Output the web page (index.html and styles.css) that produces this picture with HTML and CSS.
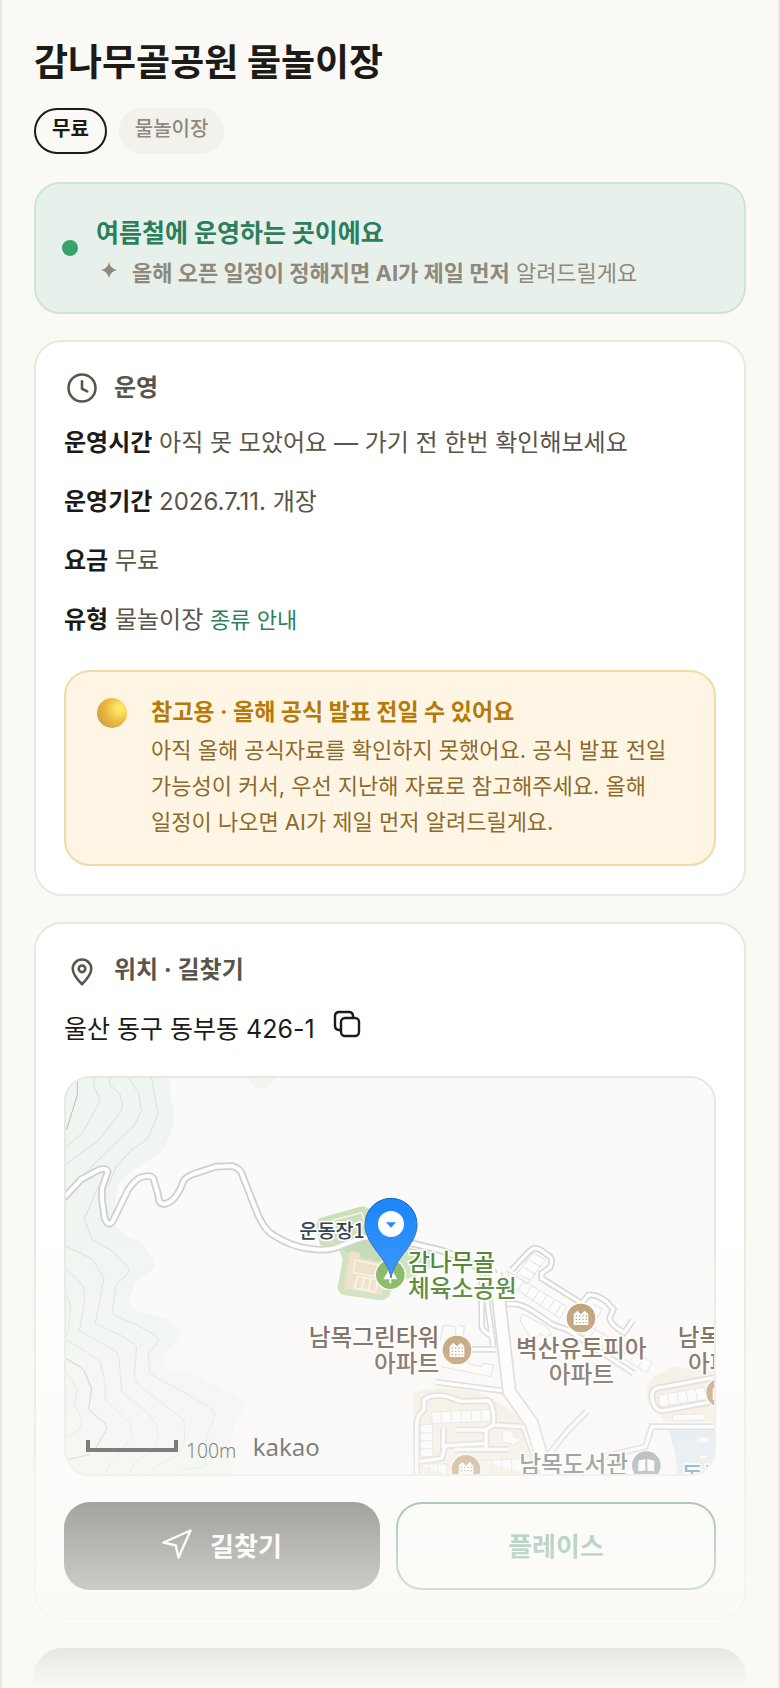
FILE: index.html
```html
<!DOCTYPE html>
<html lang="ko">
  <head>
    <meta charset="UTF-8" />
    <meta name="viewport" content="width=device-width, initial-scale=1.0" />
    <title>감나무골공원 물놀이장</title>
    <link rel="stylesheet" href="styles.css">
  </head>
  <body>
    <main class="page">
      <h1 class="title">감나무골공원 물놀이장</h1>
      <div class="chips">
        <span class="chip chip-free">무료</span>
        <span class="chip">물놀이장</span>
      </div>

      <section class="status">
        <span class="dot"></span>
        <div class="status-body">
          <h2 class="status-title">여름철에 운영하는 곳이에요</h2>
          <p class="status-sub">
            <svg class="spark" viewBox="0 0 16 16"><path d="M8 0Q9 6.500 16 8Q9.500 9.500 8 16Q6.500 9.500 0 8Q7 6.500 8 0Z" /></svg>
            <span><b>올해 오픈 일정이 정해지면 AI가 제일 먼저</b> 알려드릴게요</span>
          </p>
        </div>
      </section>

      <section class="card">
        <h2 class="card-head">
          <svg class="head-icon" viewBox="0 0 24 24"><circle cx="12" cy="12" r="9" /><path d="M12 7.5v5l3.5 1.8" /></svg>
          운영
        </h2>
        <div class="rows">
          <p><b>운영시간</b> 아직 못 모았어요 — 가기 전 한번 확인해보세요</p>
          <p><b>운영기간</b> 2026.7.11. 개장</p>
          <p><b>요금</b> 무료</p>
          <p><b>유형</b> 물놀이장 <a class="kind" href="#">종류 안내</a></p>
        </div>
        <div class="notice">
          <span class="orb"></span>
          <div class="notice-body">
            <h3 class="notice-title">참고용 · 올해 공식 발표 전일 수 있어요</h3>
            <p>아직 올해 공식자료를 확인하지 못했어요. 공식 발표 전일 가능성이 커서, 우선 지난해 자료로 참고해주세요. 올해 일정이 나오면 AI가 제일 먼저 알려드릴게요.</p>
          </div>
        </div>
      </section>

      <section class="card">
        <h2 class="card-head">
          <svg class="head-icon" viewBox="0 0 24 24"><path d="M12 21.5C9 18.5 5.8 14.6 5.8 11.2a6.2 6.2 0 0 1 12.4 0C18.2 14.6 15 18.5 12 21.5Z" /><circle cx="12" cy="11.2" r="2.2" /></svg>
          위치 · 길찾기
        </h2>
        <div class="address">
          <span>울산 동구 동부동 426-1</span>
          <button class="copy" type="button" aria-label="주소 복사">
            <svg viewBox="0 0 28 28"><rect x="8" y="8" width="18" height="18" rx="4" /><path d="M7 20H5.5A4 4 0 0 1 2 16V5.5A4 4 0 0 1 5.500 2H16A4 4 0 0 1 20 5.500V7" /></svg>
          </button>
        </div>

        <div class="map">
          <svg viewBox="18 24 1944 1188" preserveAspectRatio="xMidYMid slice">
            <!-- forest -->
            <g class="forest">
              <path d="M18 24H330V85Q348 130 338 168Q322 228 290 258Q220 290 172 345Q162 400 165 465Q190 498 230 510Q285 555 284 585Q278 608 230 635Q210 670 208 700Q214 716 240 726L320 748Q365 770 357 792Q345 825 315 850Q300 880 320 895L400 912Q460 940 490 962Q545 985 553 1000Q556 1030 525 1065Q508 1110 513 1150L516 1212H18Z" />
              <path d="M565 24Q575 55 600 57Q632 52 646 24Z" />
            </g>
            <g class="contour">
              <path d="M52 24V75L20 178M18 866L60 890L72 902L95 955L86 1015L94 1027L134 1058L141 1077L108 1133M18 1170L90 1153" class="contour-dark" />
              <path d="M101 24L102 50L119 85V95L66 190L18 232M149 24V43L181 75L187 105L183 125L115 212L18 282M206 24L235 68L245 122L222 168L155 230L80 305M275 24L293 125V137L262 207L215 240L170 288L145 345" />
              <path d="M18 375L60 330M122 345L112 355L73 447L97 510L160 545L205 592L208 605L168 645L157 730L162 735L230 765L280 792L294 807V815L265 850L270 910L310 935L370 965L462 1022V1043L440 1100L436 1190L425 1193L370 1198L355 1212" />
              <path d="M18 528L98 568L132 625L106 760L180 795L220 820L230 830L222 925L238 948L372 1050L374 1110L355 1155L290 1187L268 1212" />
              <path d="M18 598L50 625L72 655L74 690L58 782L135 825L170 845L177 865L185 960L190 970L265 1030L292 1070L294 1100L280 1140L222 1180L206 1212" />
              <path d="M18 670L31 705V730L24 782L18 800M18 810L58 832L120 873L136 940V990L210 1060L217 1090L213 1105L155 1175L134 1212M18 910L38 930L50 962L43 1000L64 1045V1065L57 1080L18 1102" />
            </g>

            <!-- sports park -->
            <g transform="translate(720 300)">
              <path class="park" d="M48 165L58 145L180 110Q205 108 225 130L330 235L410 250Q400 300 340 320L280 340L270 375Q260 392 235 390L130 375Q112 370 113 350L128 270L118 240L60 225Z" />
              <path class="park-mid" d="M120 235L190 210L215 175L300 240L280 290L150 250Z" />
              <path class="sand" d="M150 243L180 248L178 265L240 278L260 290L245 375L132 355Z" />
              <path class="park-line" d="M165 270L235 285L228 320L160 308ZM100 150L185 128L195 160L110 185ZM172 320L192 323L185 358L164 354ZM192 323L212 326L205 362L185 358ZM212 326L233 330L226 366L205 362Z" />
            </g>

            <!-- apartment blocks -->
            <g transform="translate(1020 420)">
              <path class="block" d="M38 553Q70 532 140 534L230 545Q320 580 372 640L400 720L395 792H50Z" />
              <path class="block" d="M742 525L760 500L820 470L942 488V636H798L742 578Z" />
              <path class="water" d="M805 658H942V792H832Q830 740 805 658Z" />
            </g>

            <g transform="translate(1020 420)">
              <g class="lot">
                <path d="M130 345L168 350L166 375L190 380L193 350L178 347M120 395L130 345M125 470L272 500L280 465L248 460L246 470L208 462L206 455L180 450" />
                <path d="M400 128L435 150L382 222L345 198ZM388 150L420 170M372 172L406 192M358 195L392 212M320 182L500 290L480 325L345 235ZM372 212L352 242M395 228L374 260M418 242L396 275M440 256L420 290M463 270L442 303M485 283L464 315" />
                <path d="M368 312L440 350L455 375L435 380L420 370L400 400L360 330ZM580 282L607 298L590 325M560 345L755 455L740 488L535 365M590 350L570 382M614 364L595 396M638 378L618 410M662 392L642 425M686 406L666 440M710 420L690 455M733 440L715 470" />
                <path d="M95 606L272 598L275 634L96 640ZM124 605V639M154 604V638M184 602V637M214 601V636M244 600V635M63 643H98V740H63ZM63 668H98M63 692H98M63 716H98M58 762H140V792M86 761V792M114 761V792M245 752L375 745V792M275 751V792M305 750V792M335 748V792" />
                <path d="M308 660L340 664V680L365 686L340 706L330 700L308 696ZM776 555L912 532L920 568L780 590ZM802 550L808 585M830 546L836 580M858 541L864 576M886 537L892 572M818 614L915 612V630L818 632ZM865 695L895 690V682L925 680V692L942 695M942 740L898 735V752L868 754Z" />
              </g>
              <g class="road-edge">
                <path d="M250 190L262 280L280 410M280 180L300 300L330 540L395 630L435 735L425 792" />
                <path d="M300 282H350Q380 290 400 305L460 345L505 360L700 490M335 180L390 122Q405 108 425 122L450 140Q460 152 450 172L425 190V205L545 280L565 255Q590 252 620 275L640 298L628 325Q635 348 672 368L698 332M245 200V350Q250 368 280 380M215 418H290M108 516L325 545" />
                <path d="M50 792V640Q52 615 72 600V570Q90 552 135 558L185 574L265 572Q285 590 280 645L370 650L400 730L405 792M280 645L255 660H165M258 660V718M325 718H165M130 655V708L255 700M135 708L125 745L58 755" />
                <path d="M768 535L942 503M768 535Q750 545 758 570L762 585Q768 602 790 602L942 574M942 650H756L736 710L610 740M560 605L505 660L445 735" />
              </g>
              <g class="road">
                <path d="M250 190L262 280L280 410M280 180L300 300L330 540L395 630L435 735L425 792" />
                <path d="M300 282H350Q380 290 400 305L460 345L505 360L700 490M335 180L390 122Q405 108 425 122L450 140Q460 152 450 172L425 190V205L545 280L565 255Q590 252 620 275L640 298L628 325Q635 348 672 368L698 332M245 200V350Q250 368 280 380M215 418H290M108 516L325 545" />
                <path d="M50 792V640Q52 615 72 600V570Q90 552 135 558L185 574L265 572Q285 590 280 645L370 650L400 730L405 792M280 645L255 660H165M258 660V718M325 718H165M130 655V708L255 700M135 708L125 745L58 755" />
                <path d="M768 535L942 503M768 535Q750 545 758 570L762 585Q768 602 790 602L942 574M942 650H756L736 710L610 740M560 605L505 660L445 735" />
              </g>
              <path class="avenue-edge" d="M285 190L300 300L328 545L395 640L440 792" />
              <path class="avenue" d="M285 190L300 300L328 545L395 640L440 792" />
            </g>

            <!-- mountain road -->
            <path class="trail-edge" d="M10 385L64 328L115 300Q140 292 143 305L126 355V390L134 445Q146 475 160 450L205 358Q225 330 240 323Q270 312 280 325L292 365L298 395Q310 410 335 392Q355 375 370 335Q375 322 400 312L468 290L515 288Q530 290 543 305L590 425Q610 475 635 492Q690 528 740 535Q795 545 830 532L900 506Q940 495 990 505L1140 540Q1200 560 1285 610" />
            <path class="trail" d="M10 385L64 328L115 300Q140 292 143 305L126 355V390L134 445Q146 475 160 450L205 358Q225 330 240 323Q270 312 280 325L292 365L298 395Q310 410 335 392Q355 375 370 335Q375 322 400 312L468 290L515 288Q530 290 543 305L590 425Q610 475 635 492Q690 528 740 535Q795 545 830 532L900 506Q940 495 990 505L1140 540Q1200 560 1285 610" />

            <!-- place badges -->
            <g class="badge">
              <circle cx="991" cy="614" r="45" class="badge-park" />
              <path class="badge-fill" d="M991 590L1012 628H994V640H988V628H970Z" />
              <circle cx="1191" cy="840" r="45" />
              <circle cx="1563" cy="744" r="45" />
              <circle cx="1982" cy="968" r="45" />
              <circle cx="1218" cy="1198" r="45" />
              <circle cx="1759" cy="1187" r="45" class="badge-library" />
            </g>
            <path class="badge-fill" d="M1169 861V829L1180 818L1191 829L1202 818L1213 829V861ZM1541 765V733L1552 722L1563 733L1574 722L1585 733V765ZM1196 1219V1187L1207 1176L1218 1187L1229 1176L1240 1187V1219ZM1958 989V957L1969 946L1980 957V989Z" />
            <path class="windows" d="M1175 834H1210M1175 844H1210M1175 854H1210M1547 738H1582M1547 748H1582M1547 758H1582M1202 1192H1237M1202 1202H1237" />
            <path class="badge-fill" d="M1735 1172L1756 1167V1202L1735 1204ZM1762 1167L1783 1172V1204L1762 1202Z" />

            <g class="label">
              <text class="label-ground" x="718" y="503">운동장1</text>
              <g class="label-park">
                <text x="1044" y="604">감나무골</text>
                <text x="1044" y="681">체육소공원</text>
              </g>
              <g class="label-apt">
                <text x="1138" y="828" text-anchor="end">남목그린타워</text>
                <text x="1138" y="906" text-anchor="end">아파트</text>
                <text x="1564" y="861" text-anchor="middle">벽산유토피아</text>
                <text x="1564" y="940" text-anchor="middle">아파트</text>
                <text x="1853" y="827">남목</text>
                <text x="1884" y="905">아파트</text>
              </g>
              <text class="label-library" x="1378" y="1209">남목도서관</text>
              <text class="label-blue" x="1864" y="1242">동부</text>
            </g>

            <!-- marker -->
            <path class="marker" d="M993 624C988 592 968 568 945 537C925 508 915 490 915 463A78 78 0 0 1 1071 463C1071 490 1061 508 1041 537C1018 568 998 592 993 624Z" />
            <circle class="marker-hole" cx="993" cy="462" r="39" />
            <path class="marker-tip" d="M978 457H1008L993 473Z" />

            <path class="scale" d="M84 1110V1140H348V1110" />
            <text class="scale-text" x="378" y="1163">100m</text>
            <text class="brand" x="578" y="1157">kakao</text>
          </svg>
        </div>

        <div class="actions">
          <button class="btn btn-dark" type="button">
            <svg class="nav-icon" viewBox="0 0 30 30"><path d="M28.5 1.5L1.5 13.5L13.8 16.5L16.5 28.5Z" /></svg>
            길찾기
          </button>
          <button class="btn btn-line" type="button">플레이스</button>
        </div>
      </section>

      <section class="next-card"></section>
      <div class="fade"></div>
    </main>
  </body>
</html>
```

FILE: styles.css
```css
* {
  box-sizing: border-box;
}
body {
  margin: 0;
  background: #faf9f5;
  color: #1c1b17;
  font-family: Inter, "Noto Sans CJK KR", sans-serif;
  font-size: 24px;
  line-height: 40px;
  word-break: keep-all;
}
h1,
h2,
h3,
p {
  margin: 0;
}
button {
  font-family: inherit;
  cursor: pointer;
}
.page {
  position: relative;
  height: 100vh;
  overflow: hidden;
  padding: 39px 32px 0;
  border-left: 2px solid #e9e7e0;
  border-right: 2px solid #e9e7e0;
}
.title {
  font-size: 37px;
  line-height: 48px;
  font-weight: 700;
}
.chips {
  display: flex;
  gap: 12px;
  margin-top: 21px;
}
.chip {
  height: 46px;
  padding: 0 16px;
  border-radius: 23px;
  background: #f2f1ec;
  color: #8f897d;
  font-size: 20px;
  line-height: 42px;
  font-weight: 500;
}
.chip-free {
  border: 2px solid #1c1b17;
  background: none;
  color: #1c1b17;
  line-height: 38px;
  font-weight: 700;
}

.status {
  display: flex;
  align-items: center;
  gap: 18px;
  margin-top: 28px;
  padding: 21px 26px;
  border: 2px solid #cfe4d8;
  border-radius: 26px;
  background: #e7f0ea;
}
.dot {
  width: 16px;
  height: 16px;
  border-radius: 50%;
  background: #36a36c;
}
.status-body {
  padding-top: 6px;
}
.status-title {
  color: #2c7f5c;
  font-size: 25px;
  line-height: 44px;
  font-weight: 700;
}
.status-sub {
  display: flex;
  align-items: center;
  gap: 15px;
  padding-left: 5px;
  color: #8f897d;
  font-size: 22px;
  line-height: 36px;
}
.spark {
  width: 16px;
  height: 16px;
  margin-bottom: 6px;
  fill: #8f897d;
}

.card {
  margin-top: 26px;
  padding: 28px;
  border: 2px solid #e9e7e0;
  border-radius: 28px;
  background: #fff;
}
.card-head {
  display: flex;
  align-items: center;
  gap: 14px;
  color: #59554b;
  font-size: 24px;
  line-height: 36px;
  font-weight: 700;
}
.head-icon {
  width: 36px;
  height: 36px;
  fill: none;
  stroke: #59554b;
  stroke-width: 1.7;
  stroke-linecap: round;
  stroke-linejoin: round;
}
.rows {
  display: flex;
  flex-direction: column;
  gap: 19px;
  margin-top: 17px;
  color: #59554b;
}
.rows b {
  color: #1c1b17;
}
.kind {
  color: #2c7f5c;
  font-size: 22px;
  text-decoration: none;
}
.notice {
  display: flex;
  gap: 24px;
  margin-top: 30px;
  padding: 24px 28px 24px 31px;
  border: 2px solid #f0dca6;
  border-radius: 26px;
  background: #fff5e4;
  color: #8c6a2c;
  font-size: 22px;
  line-height: 36px;
}
.orb {
  flex: none;
  width: 30px;
  height: 30px;
  margin-top: 2px;
  border-radius: 50%;
  background: radial-gradient(circle at 75% 35%, #ffe761 10%, #e9bb46 45%, #d8a341 75%, #d1825c);
}
.notice-title {
  margin-bottom: 4px;
  color: #b67a08;
  font-size: 23px;
  line-height: 32px;
  font-weight: 700;
}

.address {
  display: flex;
  align-items: center;
  gap: 18px;
  margin-top: 21px;
  font-size: 25px;
}
.copy {
  display: flex;
  padding: 0 0 10px;
  border: 0;
  background: none;
}
.copy svg {
  width: 28px;
  height: 28px;
  fill: none;
  stroke: #1c1b17;
  stroke-width: 2.4;
  stroke-linecap: round;
}
.map {
  height: 400px;
  margin-top: 27px;
  border: 2px solid #e9e7e0;
  border-radius: 26px;
  overflow: hidden;
  background: #fafafa;
}
.map svg {
  display: block;
  width: 100%;
  height: 100%;
  font-family: "Noto Sans CJK KR", sans-serif;
}
.forest {
  fill: #f0f5f2;
}
.contour {
  fill: none;
  stroke: #d8ded9;
  stroke-width: 3;
}
.contour-dark {
  stroke: #b9c0b5;
}
.park {
  fill: #cbdfb8;
}
.park-mid {
  fill: #c0d9b0;
}
.sand {
  fill: #ecdfc3;
}
.park-line {
  fill: none;
  stroke: #f8f3e8;
  stroke-width: 5;
}
.block {
  fill: #f5ecdf;
}
.water {
  fill: #d9e6f1;
}
.lot {
  fill: #fdfdfd;
  stroke: #dcdcdc;
  stroke-width: 3;
}
.road-edge {
  fill: none;
  stroke: #d2d2d2;
  stroke-width: 20;
}
.road {
  fill: none;
  stroke: #fff;
  stroke-width: 10;
}
.avenue-edge {
  fill: none;
  stroke: #d2d2d2;
  stroke-width: 44;
}
.avenue {
  fill: none;
  stroke: #fff;
  stroke-width: 34;
}
.trail-edge {
  fill: none;
  stroke: #d0d0d0;
  stroke-width: 23;
  stroke-linejoin: round;
}
.trail {
  fill: none;
  stroke: #fff;
  stroke-width: 12;
  stroke-linejoin: round;
}
.badge {
  fill: #b58f5e;
  stroke: #fff;
  stroke-width: 4;
}
.badge-park {
  fill: #79b354;
}
.badge-library {
  fill: #7f8a91;
}
.badge-fill {
  fill: #fff;
  stroke: none;
}
.windows {
  fill: none;
  stroke: #b58f5e;
  stroke-width: 4;
  stroke-dasharray: 4 6;
}
.label {
  font-size: 71px;
  font-weight: 500;
  stroke: #fff;
  stroke-width: 10;
  stroke-linejoin: round;
  paint-order: stroke;
}
.label-ground {
  font-size: 59px;
  fill: #2f3b4b;
}
.label-park {
  fill: #427a25;
}
.label-apt {
  fill: #5d4637;
}
.label-library {
  fill: #3f4a52;
}
.label-blue {
  fill: #2f74b8;
}
.marker {
  fill: #1e88fb;
  stroke: #1a63c9;
  stroke-width: 3;
}
.marker-hole {
  fill: #fff;
}
.marker-tip {
  fill: #1e88fb;
}
.scale {
  fill: none;
  stroke: #000;
  stroke-width: 12;
}
.scale-text {
  fill: #000;
  font-family: "Noto Sans", sans-serif;
  font-size: 58px;
  font-weight: 300;
}
.brand {
  fill: #000;
  font-family: "Noto Sans", sans-serif;
  font-size: 72px;
}

.actions {
  display: flex;
  gap: 16px;
  margin-top: 26px;
}
.btn {
  display: flex;
  flex: 1;
  align-items: center;
  justify-content: center;
  gap: 18px;
  height: 88px;
  padding: 0 20px 4px;
  border-radius: 26px;
  font-size: 26px;
  font-weight: 700;
}
.btn-dark {
  border: 0;
  background: #1c1b17;
  color: #fff;
}
.btn-line {
  border: 2px solid #2c7f5c;
  background: none;
  color: #2c7f5c;
}
.nav-icon {
  width: 30px;
  height: 30px;
  fill: none;
  stroke: #fff;
  stroke-width: 2.4;
  stroke-linejoin: round;
}
.next-card {
  height: 320px;
  margin-top: 28px;
  border-radius: 28px;
  background: #1c1b17;
}
.fade {
  position: absolute;
  left: 0;
  right: 0;
  bottom: 0;
  height: 478px;
  background: linear-gradient(rgba(250, 249, 245, 0), #faf9f5);
  pointer-events: none;
}
```
